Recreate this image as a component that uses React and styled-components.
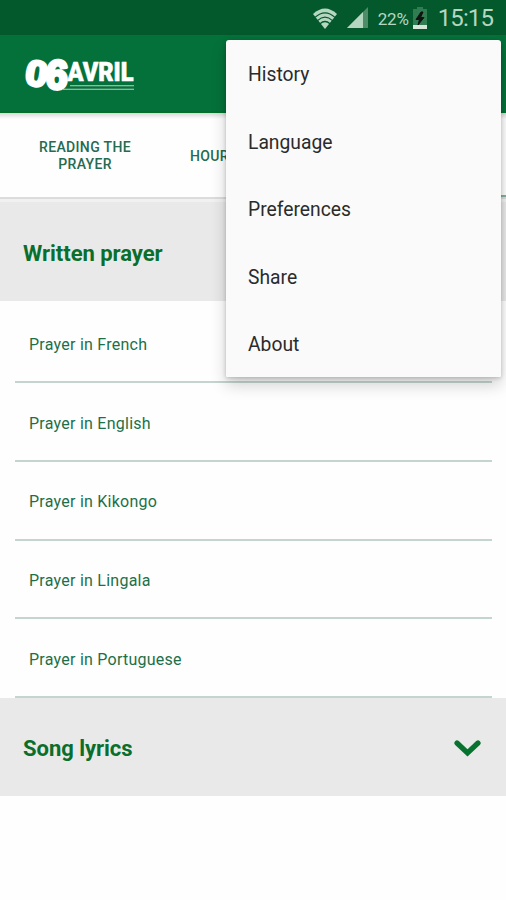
import React from "react";
import styled, { createGlobalStyle, css } from "styled-components";

const green = "#05713a";
const textGreen = "#1c7049";

const GlobalStyle = createGlobalStyle`
  * {
    box-sizing: border-box;
  }
  body {
    margin: 0;
    background: #fff;
    font-family: Roboto, sans-serif;
  }
`;

const Screen = styled.div`
  position: relative;
  width: 506px;
  height: 900px;
  overflow: hidden;
  background: #fefefe;
`;

const StatusBar = styled.header`
  display: flex;
  align-items: center;
  justify-content: flex-end;
  height: 35px;
  padding: 0 13px 0 0;
  background: #03582c;
  color: #b5d6c0;
`;

const Battery = styled.span`
  margin-left: 9px;
  padding-top: 2px;
  font-size: 17px;
  letter-spacing: -0.2px;
`;

const Clock = styled.span`
  margin-left: 11px;
  padding-top: 2px;
  font-size: 24px;
  line-height: 33px;
  letter-spacing: -0.9px;
`;

const AppBar = styled.div`
  display: flex;
  height: 78px;
  padding: 17px 0 0 22px;
  background: ${green};
  border-bottom: 2px solid #04702a;
`;

const Tabs = styled.nav`
  display: flex;
  height: 86px;
  border-bottom: 2px solid #dcdcdc;
  background: linear-gradient(#d8d8d8, #fefefe 6px);
`;

const Tab = styled.div`
  display: flex;
  flex: none;
  align-items: center;
  justify-content: center;
  width: 170px;
  padding-top: 2px;
  font-size: 14px;
  font-weight: 500;
  line-height: 17px;
  letter-spacing: 0.35px;
  text-align: center;
  color: #256b50;
  ${props =>
    props.$start &&
    css`
      justify-content: flex-start;
      padding-left: 20px;
    `}
  ${props =>
    props.$active &&
    css`
      border-bottom: 2px solid #7fb29b;
    `}
`;

const Section = styled.section`
  display: flex;
  align-items: center;
  justify-content: space-between;
  height: 98px;
  padding: 2px 25px 0 23px;
  background: #e9e9e9;
  ${props =>
    props.$first &&
    css`
      height: 102px;
      padding-top: 3px;
      border-top: 3px solid #f1f1f1;
    `}
`;

const SectionTitle = styled.h2`
  margin: 0;
  font-size: 22px;
  font-weight: 700;
  letter-spacing: -0.03px;
  color: #0a6e2c;
`;

const List = styled.ul`
  margin: 0;
  padding: 3.5px 14px 0.5px 15px;
  list-style: none;
`;

const ListItem = styled.li`
  display: flex;
  align-items: center;
  height: 78.7px;
  padding: 3px 0 0 14px;
  border-bottom: 2px solid #c3d5ce;
  font-size: 16px;
  letter-spacing: 0.25px;
  color: ${textGreen};
`;

const Menu = styled.div`
  position: absolute;
  top: 40px;
  left: 226px;
  width: 275px;
  height: 337px;
  border-radius: 3px 3px 1px 1px;
  background: #fafafa;
  box-shadow: 0 8px 16px rgba(0, 0, 0, 0.18), 0 1px 4px rgba(0, 0, 0, 0.2);
`;

const MenuItem = styled.div`
  display: flex;
  align-items: center;
  height: 67.5px;
  padding: 2px 0 0 22px;
  font-size: 19.3px;
  color: #2b2b2b;
`;

const Logo = () => (
  <svg width="116" height="44" viewBox="22 52 116 44" fill="#fff">
    <g stroke="#fff" strokeLinejoin="round">
      <g
        fontFamily="'Liberation Sans', sans-serif"
        fontSize="34"
        fontWeight="700"
        strokeWidth="2.8"
      >
        <text transform="translate(24 84) rotate(9) scale(1.16 1.05)">0</text>
        <text transform="translate(45 88) rotate(4) scale(1.16 1.2)">6</text>
      </g>
      <text
        x="67.5"
        y="80.8"
        fontFamily="Roboto, sans-serif"
        fontSize="25.5"
        fontWeight="900"
        strokeWidth="0.6"
        textLength="66"
        lengthAdjust="spacingAndGlyphs"
      >
        AVRIL
      </text>
    </g>
    <path d="M70 85.2h64v1H70zM63 88.8h71v1H63z" opacity=".7" />
  </svg>
);

const WifiIcon = styled(props => (
  <svg width="26" height="24" viewBox="0 0 26 24" {...props}>
    <path d="M1 8Q13-3 25 8L13 23Z" fill="#b5d6c0" />
    <g fill="none" stroke="#03582c" strokeWidth="1.2">
      <path d="M3 11.4Q13 2.2 23 11.4" />
      <path d="M5.5 14.6Q13 7.8 20.5 14.6" />
      <path d="M8 17.8Q13 13.2 18 17.8" />
    </g>
  </svg>
))`
  margin-right: 2px;
`;

const SignalIcon = styled(props => (
  <svg width="22" height="21" viewBox="0 0 22 21" {...props}>
    <path d="M21 0v21H0z" fill="#4d8d68" />
    <path d="M16 5v16H0z" fill="#b5d6c0" />
  </svg>
))`
  margin-left: 7px;
`;

const BatteryIcon = styled(props => (
  <svg width="14" height="22" viewBox="0 0 14 22" {...props}>
    <path d="M4 0h6v2h4v20H0V2h4z" fill="#2f7d50" />
    <path d="M0 18h14v4H0z" fill="#d5e6d8" />
    <path d="M8 5 3 12.5h3.5L5 18l6-7.5H7.5L10 5z" fill="#111" stroke="#111" />
  </svg>
))`
  margin-left: 4px;
`;

const Chevron = () => (
  <svg width="28" height="18" viewBox="0 0 28 18">
    <path
      d="M4 4l10.5 10L25 4"
      fill="none"
      stroke="#08722f"
      strokeWidth="5.2"
      strokeLinecap="round"
    />
  </svg>
);

const languages = ["French", "English", "Kikongo", "Lingala", "Portuguese"];
const menuItems = ["History", "Language", "Preferences", "Share", "About"];

const App = () => (
  <Screen>
    <GlobalStyle />
    <StatusBar>
      <WifiIcon />
      <SignalIcon />
      <Battery>22%</Battery>
      <BatteryIcon />
      <Clock>15:15</Clock>
    </StatusBar>
    <AppBar>
      <Logo />
    </AppBar>
    <Tabs>
      <Tab>
        READING THE
        <br />
        PRAYER
      </Tab>
      <Tab $start>HOUR</Tab>
      <Tab $active />
    </Tabs>
    <Section $first>
      <SectionTitle>Written prayer</SectionTitle>
    </Section>
    <List>
      {languages.map(language => (
        <ListItem key={language}>Prayer in {language}</ListItem>
      ))}
    </List>
    <Section>
      <SectionTitle>Song lyrics</SectionTitle>
      <Chevron />
    </Section>
    <Menu>
      {menuItems.map(item => (
        <MenuItem key={item}>{item}</MenuItem>
      ))}
    </Menu>
  </Screen>
);

export default App;
